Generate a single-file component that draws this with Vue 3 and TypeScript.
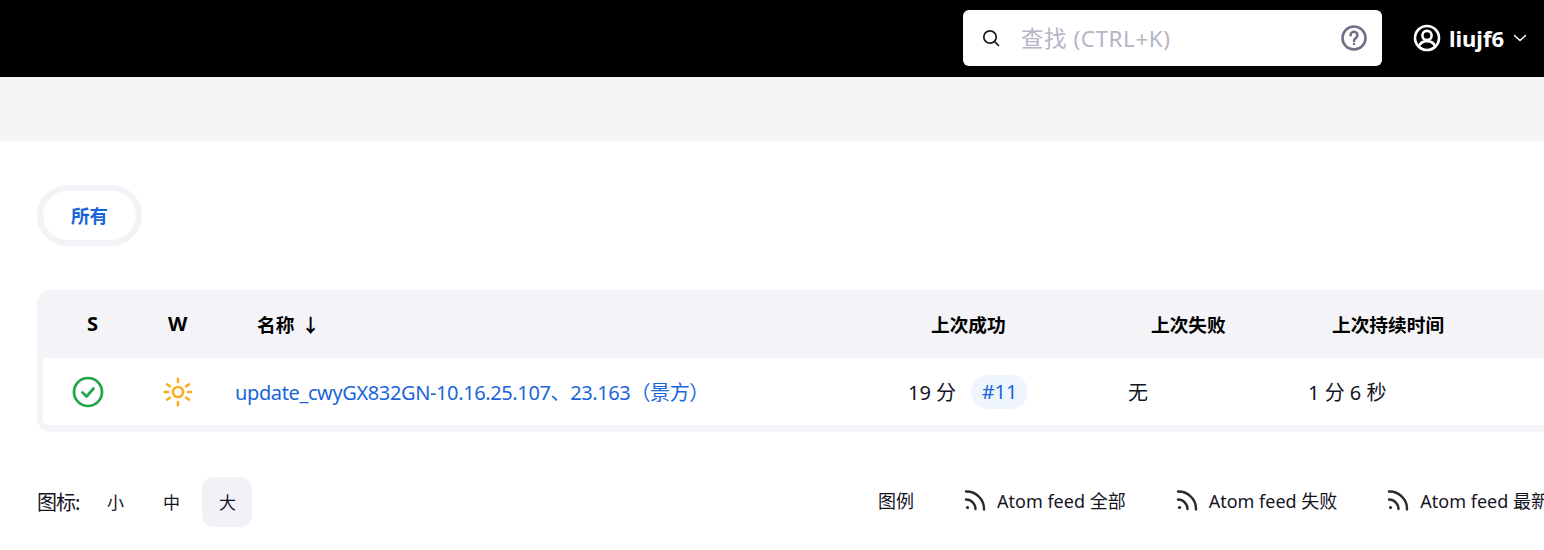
<script setup lang="ts">
interface Feed { label: string }
const feeds: Feed[] = [
  { label: 'Atom feed 全部' },
  { label: 'Atom feed 失败' },
  { label: 'Atom feed 最新的构建' },
]
const sizes: string[] = ['小', '中', '大']
const rays: number[] = [0, 55, 90, 125, 180, 235, 270, 305]
</script>

<template>
  <div class="page">
    <header class="topbar">
      <div class="search">
        <svg class="search-icon" width="20" height="20" viewBox="0 0 20 20" fill="none" stroke="#1b1b24" stroke-width="1.7" stroke-linecap="round">
          <circle cx="9" cy="9" r="6.2" />
          <path d="M13.6 13.6 17.5 17.5" />
        </svg>
        <span class="search-text">查找 (CTRL+K)</span>
        <svg class="help" width="28" height="28" viewBox="0 0 28 28" fill="none" stroke="#6f6f85" stroke-width="2.6" stroke-linecap="round">
          <circle cx="14" cy="14" r="11.5" />
          <path d="M10.6 11.2a3.4 3.4 0 1 1 5.4 2.7c-1.2.8-2 1.4-2 3" />
          <circle cx="14" cy="20" r=".6" fill="#6f6f85" stroke-width="1.2" />
        </svg>
      </div>
      <div class="user">
        <svg width="28" height="28" viewBox="0 0 28 28" fill="none" stroke="#fff" stroke-width="2.6">
          <circle cx="14" cy="14" r="12" />
          <circle cx="14" cy="11.5" r="4.6" />
          <path d="M5.800 22.500c1.400-3.800 4.400-5.400 8.200-5.400s6.800 1.600 8.200 5.400" />
        </svg>
        <span class="user-name">liujf6</span>
        <svg width="16" height="16" viewBox="0 0 16 16" fill="none" stroke="#fff" stroke-width="1.5" stroke-linecap="round" stroke-linejoin="round">
          <path d="M2.500 5.500 8 10.500l5.500-5" />
        </svg>
      </div>
    </header>

    <div class="band"></div>

    <main class="content">
      <div class="tabs">
        <a class="tab">所有</a>
      </div>

      <section class="table">
        <div class="head">
          <span class="th c-s">S</span>
          <span class="th c-w">W</span>
          <span class="th c-name">名称 <span class="arrow">↓</span></span>
          <span class="th c-ok">上次成功</span>
          <span class="th c-fail">上次失败</span>
          <span class="th c-dur">上次持续时间</span>
        </div>
        <div class="row">
          <span class="c-s icon-cell">
            <svg width="32" height="32" viewBox="0 0 32 32" fill="none" stroke="#1ea64a" stroke-width="2.7" stroke-linecap="round" stroke-linejoin="round">
              <circle cx="16" cy="16" r="14" />
              <path d="M10.500 16.500 14.500 20.500 21.500 12.500" />
            </svg>
          </span>
          <span class="c-w icon-cell">
            <svg width="30" height="30" viewBox="0 0 30 30" fill="none" stroke="#fdaa1f" stroke-width="2.6" stroke-linecap="round">
              <circle cx="15" cy="15" r="5" />
              <path v-for="r in rays" :key="r" d="M15 1.800v3.200" :transform="`rotate(${r} 15 15)`" />
            </svg>
          </span>
          <a class="job c-name">update_cwyGX832GN-10.16.25.107、23.163（景方）</a>
          <span class="c-ok ok-cell">19 分<a class="badge">#11</a></span>
          <span class="c-fail">无</span>
          <span class="c-dur">1 分 6 秒</span>
        </div>
      </section>

      <footer class="foot">
        <div class="sizes">
          <span class="size-label">图标:</span>
          <span v-for="s in sizes" :key="s" class="size" :class="{ active: s === '大' }">{{ s }}</span>
        </div>
        <div class="links">
          <span class="legend">图例</span>
          <a v-for="f in feeds" :key="f.label" class="feed">
            <svg width="22" height="22" viewBox="0 0 22 22" fill="none" stroke="#2a2a33" stroke-width="2.4" stroke-linecap="round">
              <circle cx="3.500" cy="18.500" r="1.600" fill="#2a2a33" stroke="none" />
              <path d="M2 10.500a9.500 9.500 0 0 1 9.500 9.500" />
              <path d="M2 2.500a17.500 17.500 0 0 1 18 18" />
            </svg>
            <span>{{ f.label }}</span>
          </a>
        </div>
      </footer>
    </main>
  </div>
</template>

<style>
html, body { margin: 0; background: #fff; overflow: hidden; }
</style>

<style scoped>
.page {
  width: 1544px;
  height: 550px;
  overflow: hidden;
  font-family: "Noto Sans", "Noto Sans CJK SC", sans-serif;
  color: #14141f;
  background: #fff;
}
.topbar {
  height: 77px;
  background: #000;
  display: flex;
  align-items: center;
  justify-content: flex-end;
  padding: 0 16px 2px 0;
  box-sizing: border-box;
}
.search {
  width: 419px;
  height: 56px;
  background: #fff;
  border-radius: 6px;
  display: flex;
  align-items: center;
  padding: 0 14px 0 18px;
  box-sizing: border-box;
}
.search-icon { flex: none; }
.search-text {
  flex: 1;
  margin-left: 20px;
  font-size: 22.5px;
  color: #b5b5c6;
  letter-spacing: 0.55px;
}
.help { flex: none; }
.user {
  margin-left: 31px;
  display: flex;
  align-items: center;
  color: #fff;
}
.user-name {
  margin-left: 8px;
  margin-right: 8px;
  font-size: 22px;
  font-weight: 700;
}
.band {
  height: 64px;
  background: #f5f5f8;
}
.content {
  padding: 44px 0 0 37px;
}
.tabs {
  display: inline-flex;
  border: 6px solid #f2f2f7;
  border-radius: 31px;
}
.tab {
  width: 93px;
  height: 49px;
  display: flex;
  align-items: center;
  justify-content: center;
  padding-bottom: 2px;
  box-sizing: border-box;
  font-size: 18.5px;
  font-weight: 700;
  color: #1a66d9;
}
.table {
  margin-top: 44px;
  width: 1560px;
  background: #f4f4f8;
  border-radius: 14px;
  padding: 0 6px 7px;
  box-sizing: border-box;
}
.head, .row {
  display: grid;
  grid-template-columns: 92px 92px 658px 220px 180px 1fr;
  align-items: center;
}
.head { height: 68px; padding-bottom: 2px; box-sizing: border-box; }
.row {
  height: 67px;
  background: #fff;
  border-radius: 0 0 6px 6px;
  font-size: 20px;
}
.th {
  font-size: 18.7px;
  font-weight: 700;
  color: #000;
}
.arrow { font-weight: 700; margin-left: 2px; }
.head .c-s { padding-left: 44px; font-size: 20px; }
.head .c-w { padding-left: 33px; font-size: 20px; }
.head .c-name { padding-left: 30px; }
.head .c-ok { padding-left: 46px; }
.head .c-fail { padding-left: 46px; }
.head .c-dur { padding-left: 47px; }
.icon-cell { display: flex; }
.row .c-s { padding-left: 29px; }
.row .c-w { padding-left: 28px; }
.job { color: #1a66d9; padding-left: 8px; white-space: nowrap; letter-spacing: -0.38px; }
.ok-cell { display: flex; align-items: center; padding-left: 23px; }
.row .c-fail { padding-left: 23px; }
.row .c-dur { padding-left: 23px; }
.badge {
  margin-left: 15px;
  width: 57px;
  height: 34px;
  border-radius: 17px;
  background: #eff5fd;
  color: #1a66d9;
  display: flex;
  align-items: center;
  justify-content: center;
}
.foot {
  margin-top: 45px;
  display: flex;
  align-items: center;
  font-size: 18px;
}
.sizes { display: flex; align-items: center; width: 841px; flex: none; }
.size-label { font-size: 20px; margin-right: 11px; letter-spacing: -1px; margin-bottom: 2px; }
.size {
  width: 50px;
  height: 50px;
  margin-right: 6px;
  border-radius: 12px;
  display: flex;
  align-items: center;
  justify-content: center;
  font-size: 17px;
  padding-bottom: 2px;
  box-sizing: border-box;
}
.size.active { background: #f1f1f7; }
.links { display: flex; align-items: center; white-space: nowrap; margin-bottom: 5px; }
.legend { margin-right: 50px; }
.feed {
  display: flex;
  align-items: center;
  gap: 11px;
  margin-right: 50px;
}
</style>
